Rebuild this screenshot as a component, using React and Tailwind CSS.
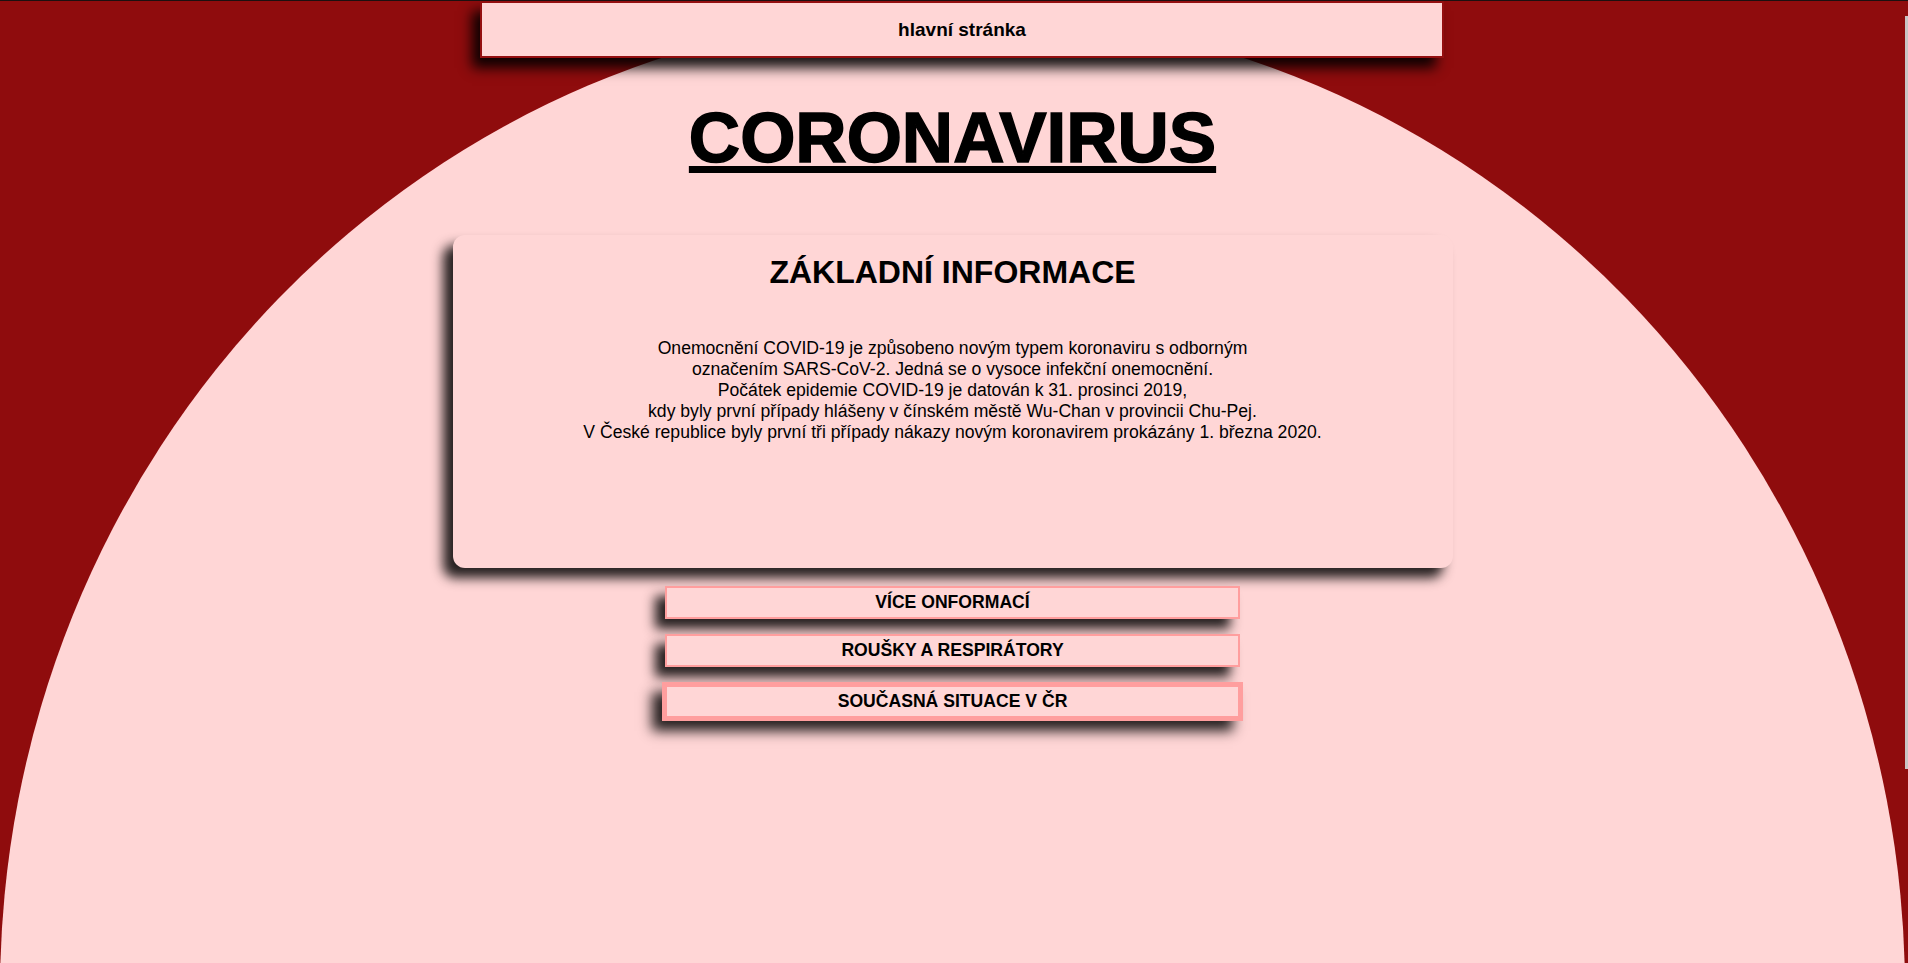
import React from 'react';

const links = [
  { label: 'VÍCE ONFORMACÍ', active: false },
  { label: 'ROUŠKY A RESPIRÁTORY', active: false },
  { label: 'SOUČASNÁ SITUACE V ČR', active: true },
];

export default function App() {
  return (
    <div className="relative min-h-screen h-[963px] overflow-hidden bg-[#8f0c0d] border-t border-[#1c1010] font-['Liberation_Sans',Arial,sans-serif] text-black">
      {/* big pink oval behind everything */}
      <div className="absolute left-0 top-[10px] w-[1905px] h-[1960px] rounded-[50%] bg-[#ffd6d6]" />
      {/* scrollbar thumb */}
      <div className="absolute right-0 top-[15px] w-[3px] h-[753px] bg-[#c9c4c4]" />

      <div className="relative w-[1905px] flex flex-col items-center">
        <nav className="self-start ml-[480px] w-[964px] h-[57px] border-2 border-[#940f10] bg-[#ffd6d6] flex items-center justify-center shadow-[-8px_10px_12px_rgba(0,0,0,0.9)]">
          <a href="#" className="text-[19px] font-bold leading-[normal]">hlavní stránka</a>
        </nav>

        <h1 className="mt-[39px] text-[71px] font-bold leading-[normal] underline [-webkit-text-stroke:1.5px_black]">CORONAVIRUS</h1>

        <div className="mt-[57px] w-[1000px] h-[333px] rounded-xl bg-[#ffd6d6] pt-[19px] text-center shadow-[-10px_10px_12px_rgba(0,0,0,0.85)]">
          <h2 className="text-[32px] font-bold leading-[normal]">ZÁKLADNÍ INFORMACE</h2>
          <p className="mt-[47px] text-[17.6px] leading-[21px]">
            Onemocnění COVID-19 je způsobeno novým typem koronaviru s odborným<br />
            označením SARS-CoV-2. Jedná se o vysoce infekční onemocnění.<br />
            Počátek epidemie COVID-19 je datován k 31. prosinci 2019,<br />
            kdy byly první případy hlášeny v čínském městě Wu-Chan v provincii Chu-Pej.<br />
            V České republice byly první tři případy nákazy novým koronavirem prokázány 1. března 2020.
          </p>
        </div>

        <div className="mt-[18px] flex flex-col items-center gap-[15px]">
          {links.map((l) => (
            <a
              key={l.label}
              href="#"
              className={`w-[571px] h-[29px] box-content flex items-center justify-center bg-[#ffd6d6] text-[17.6px] font-bold leading-[normal] shadow-[-10px_10px_12px_rgba(0,0,0,0.85)] ${
                l.active ? 'border-[5px] border-[#ff9e9e]' : 'border-2 border-[#ff9e9e]'
              }`}
            >
              {l.label}
            </a>
          ))}
        </div>
      </div>
    </div>
  );
}
